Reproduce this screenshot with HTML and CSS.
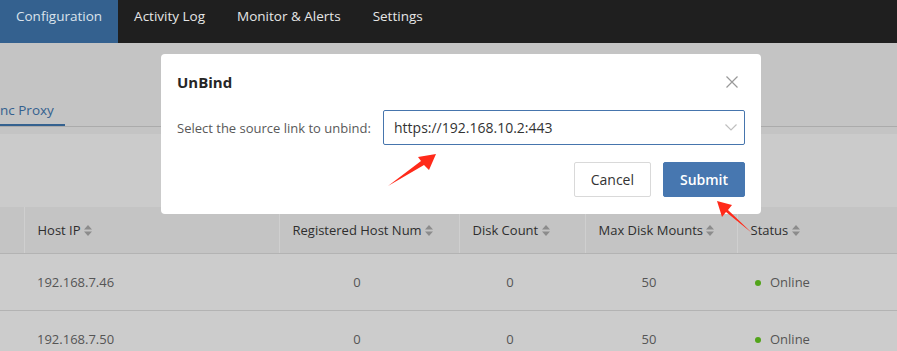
FILE: index.html
```html
<!DOCTYPE html>
<html lang="en">
<head>
  <meta charset="UTF-8" />
  <title>UnBind</title>
  <link rel="stylesheet" href="styles.css">
</head>
<body>

  <!-- top navigation -->
  <div class="top-nav">
    <a class="nav-item active">Configuration</a>
    <a class="nav-item">Activity Log</a>
    <a class="nav-item">Monitor &amp; Alerts</a>
    <a class="nav-item">Settings</a>
  </div>

  <!-- page under the mask -->
  <div class="page">
    <div class="sub-tabs">
      <span class="sub-tab active">nc Proxy</span>
    </div>
    <div class="toolbar"></div>

    <table class="host-table">
      <colgroup>
        <col style="width:24px">
        <col style="width:255px">
        <col style="width:180px">
        <col style="width:126px">
        <col style="width:152px">
        <col>
      </colgroup>
      <thead>
        <tr>
          <th></th>
          <th>Host IP <span class="sorter"><svg width="8" height="11" viewBox="0 0 8 11"><path d="M4 0L8 4.5H0z M4 11L8 6.5H0z" fill="#8c8c8c"/></svg></span></th>
          <th>Registered Host Num <span class="sorter"><svg width="8" height="11" viewBox="0 0 8 11"><path d="M4 0L8 4.5H0z M4 11L8 6.5H0z" fill="#8c8c8c"/></svg></span></th>
          <th>Disk Count <span class="sorter"><svg width="8" height="11" viewBox="0 0 8 11"><path d="M4 0L8 4.5H0z M4 11L8 6.5H0z" fill="#8c8c8c"/></svg></span></th>
          <th>Max Disk Mounts <span class="sorter"><svg width="8" height="11" viewBox="0 0 8 11"><path d="M4 0L8 4.5H0z M4 11L8 6.5H0z" fill="#8c8c8c"/></svg></span></th>
          <th>Status <span class="sorter"><svg width="8" height="11" viewBox="0 0 8 11"><path d="M4 0L8 4.5H0z M4 11L8 6.5H0z" fill="#8c8c8c"/></svg></span></th>
        </tr>
      </thead>
      <tbody>
        <tr>
          <td></td>
          <td>192.168.7.46</td>
          <td class="num">0</td>
          <td class="num">0</td>
          <td class="num">50</td>
          <td><span class="dot"></span>Online</td>
        </tr>
        <tr>
          <td></td>
          <td>192.168.7.50</td>
          <td class="num">0</td>
          <td class="num">0</td>
          <td class="num">50</td>
          <td><span class="dot"></span>Online</td>
        </tr>
      </tbody>
    </table>
  </div>

  <!-- UnBind dialog -->
  <div class="modal">
    <div class="modal-header">
      <span class="modal-title">UnBind</span>
      <svg class="close" width="12" height="12" viewBox="0 0 12 12"><path d="M0.5 0.5L11.5 11.5M11.5 0.5L0.5 11.5" stroke="#999" stroke-width="1.2" fill="none"/></svg>
    </div>
    <div class="modal-body">
      <label class="field-label">Select the source link to unbind:</label>
      <div class="select">
        <span>https://192.168.10.2:443</span>
        <svg width="12" height="7" viewBox="0 0 12 7"><path d="M0.5 0.5L6 6L11.5 0.5" stroke="#bfbfbf" stroke-width="1.2" fill="none"/></svg>
      </div>
    </div>
    <div class="modal-footer">
      <button class="btn">Cancel</button>
      <button class="btn primary">Submit</button>
    </div>
  </div>

  <!-- red annotation arrows -->
  <svg class="arrows" width="897" height="351" viewBox="0 0 897 351">
    <polygon points="388,186 424,165 429,170 436,154 418,157 421,161" fill="#ff2a1a"/>
    <polygon points="717,201 732,205 728,210 752,233 726,212 722,217" fill="#ff2a1a"/>
  </svg>

</body>
</html>
```

FILE: styles.css
```css
body {
  margin: 0;
  background-color: #c4c4c4;
  font-family: 'Open Sans', 'Noto Sans', sans-serif;
  font-size: 13px;
  color: #333;
  width: 897px;
  height: 351px;
  overflow: hidden;
}

/* top navigation */
.top-nav {
  display: flex;
  height: 43px;
  background-color: #1f1f1f;
}

.nav-item {
  padding: 0 16px;
  line-height: 32px;
  color: #e6e6e6;
  font-size: 13.5px;
}

.nav-item.active {
  background-color: #34618f;
  color: #dbe3ec;
}

/* sub tabs */
.sub-tabs {
  margin-top: 53px;
  border-bottom: 1px solid #ababab;
  height: 30px;
}

.sub-tab {
  display: inline-block;
  width: 65px;
  line-height: 28px;
  font-size: 13.5px;
  color: #34618f;
  border-bottom: 2px solid #34618f;
}

.toolbar {
  margin-top: 7px;
  height: 73px;
  background-color: #cbcbcb;
}

/* table */
.host-table {
  width: 897px;
  border-collapse: collapse;
  table-layout: fixed;
}

.host-table th {
  height: 46px;
  padding: 0 0 0 13px;
  text-align: left;
  font-weight: normal;
  color: #2e2e2e;
  background-color: #c4c4c4;
  border-left: 1px solid #cfcfcf;
  border-bottom: 1px solid #b3b3b3;
}

.host-table th:first-child {
  border-left: none;
}

.sorter svg {
  vertical-align: -1px;
}

.host-table td {
  height: 56px;
  padding: 0 0 0 13px;
  color: #555;
  background-color: #cccccc;
  border-bottom: 1px solid #b3b3b3;
}

.host-table td.num {
  text-align: center;
  padding: 0 24px 0 0;
}

.dot {
  display: inline-block;
  width: 6px;
  height: 6px;
  border-radius: 50%;
  background-color: #52a41a;
  margin: 0 9px 1px 5px;
  vertical-align: middle;
}

/* dialog */
.modal {
  position: absolute;
  left: 161px;
  top: 54px;
  width: 600px;
  height: 160px;
  box-sizing: border-box;
  padding: 0 16px;
  background-color: #fff;
  border-radius: 4px;
  display: flex;
  flex-direction: column;
}

.modal-header {
  height: 56px;
  display: flex;
  align-items: center;
  justify-content: space-between;
  padding-right: 7px;
}

.modal-title {
  font-size: 15px;
  font-weight: bold;
  color: #262626;
}

.modal-body {
  display: flex;
  align-items: center;
  gap: 8px;
}

.field-label {
  width: 198px;
  white-space: nowrap;
  color: #595959;
}

.select {
  flex: 1;
  height: 35px;
  box-sizing: border-box;
  border: 1px solid #4675ad;
  border-radius: 2px;
  padding: 0 7px 0 10px;
  display: flex;
  align-items: center;
  justify-content: space-between;
  font-size: 14px;
  color: #333;
}

.modal-footer {
  margin-top: 17px;
  display: flex;
  justify-content: flex-end;
  gap: 12px;
}

.btn {
  height: 35px;
  padding: 0 16px;
  font-family: inherit;
  font-size: 14px;
  color: #333;
  background-color: #fff;
  border: 1px solid #d9d9d9;
  border-radius: 2px;
}

.btn.primary {
  width: 82px;
  padding: 0;
  background-color: #4777b0;
  border-color: #4777b0;
  color: #fff;
  font-weight: 600;
}

/* annotation arrows */
.arrows {
  position: absolute;
  left: 0;
  top: 0;
  pointer-events: none;
}
```
